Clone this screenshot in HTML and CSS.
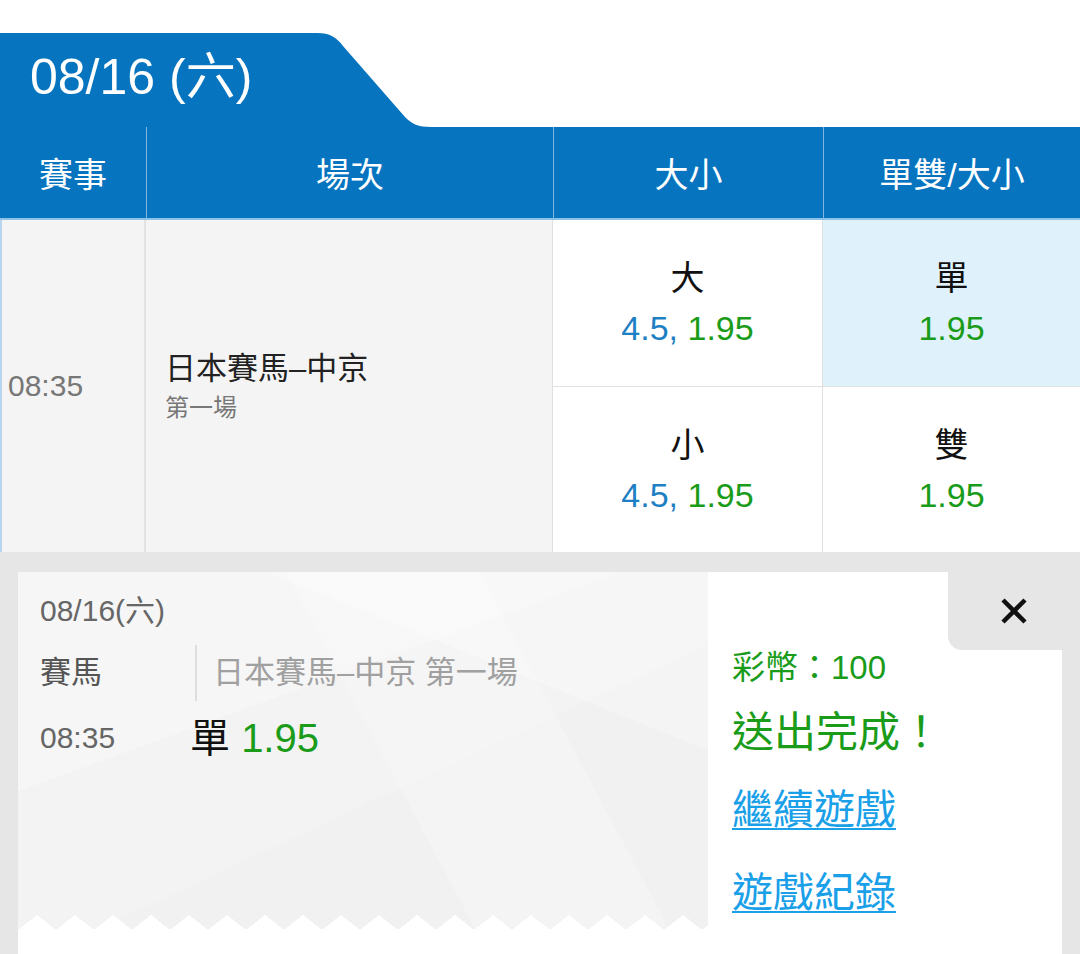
FILE: index.html
```html
<!DOCTYPE html>
<html>
<head>
    <meta charset="utf-8">
    <link rel="stylesheet" href="styles.css">
</head>
<body>
    <div class="page">
        <div class="date-bar">
            <div class="date-tab">08/16 (六)</div>
            <svg class="date-slope" width="150" height="94" viewBox="0 0 150 94">
                <path d="M0 0H34C47 0 53 4 60 13L122 84C129 91 135 94 148 94H0Z" fill="#0674bf"/>
            </svg>
        </div>
        <div class="board">
            <div class="th">賽事</div>
            <div class="th">場次</div>
            <div class="th">大小</div>
            <div class="th">單雙/大小</div>

            <div class="td-time">08:35</div>
            <div class="td-race">
                <div class="race-name">日本賽馬–中京</div>
                <div class="race-no">第一場</div>
            </div>
            <div class="odds top mid">
                <div class="pick">大</div>
                <div class="price"><span class="line">4.5,</span> <span class="rate">1.95</span></div>
            </div>
            <div class="odds top picked">
                <div class="pick">單</div>
                <div class="price"><span class="rate">1.95</span></div>
            </div>
            <div class="odds mid">
                <div class="pick">小</div>
                <div class="price"><span class="line">4.5,</span> <span class="rate">1.95</span></div>
            </div>
            <div class="odds">
                <div class="pick">雙</div>
                <div class="price"><span class="rate">1.95</span></div>
            </div>
        </div>

        <div class="result">
            <div class="ticket">
                <div class="stub">
                    <div class="stub-date">08/16(六)</div>
                    <div class="stub-grid">
                        <div class="stub-type">賽馬</div>
                        <div class="stub-event">日本賽馬–中京 第一場</div>
                        <div class="stub-time">08:35</div>
                        <div class="stub-bet">單 <span class="rate">1.95</span></div>
                    </div>
                </div>
                <div class="panel">
                    <div class="close">
                        <svg width="28" height="28" viewBox="0 0 28 28">
                            <path d="M3 3L25 25M25 3L3 25" stroke="#111" stroke-width="4.5" fill="none"/>
                        </svg>
                    </div>
                    <div class="panel-body">
                        <div class="coins">彩幣：100</div>
                        <div class="done">送出完成！</div>
                        <a href="#" class="more">繼續遊戲</a>
                        <a href="#" class="history">遊戲紀錄</a>
                    </div>
                </div>
            </div>
        </div>
    </div>
</body>
</html>
```

FILE: styles.css
```css
body {
    margin: 0;
    background: #fff;
    font-family: "Liberation Sans", "Noto Sans CJK TC", sans-serif;
}
.page {
    width: 1080px;
    padding-top: 33px;
}
.date-bar {
    display: flex;
    height: 94px;
}
.date-tab {
    width: 283px;
    box-sizing: border-box;
    padding-left: 30px;
    background: #0674bf;
    color: #fff;
    font-size: 50px;
    line-height: 88px;
    white-space: nowrap;
}
.date-slope {
    display: block;
}
.board {
    display: grid;
    grid-template-columns: 146px 407px 270px 257px;
    grid-template-rows: 93px 167px 165px;
}
.board > div {
    box-sizing: border-box;
}
.th {
    display: flex;
    align-items: center;
    justify-content: center;
    background: #0674bf;
    color: #fff;
    font-size: 34px;
    border-bottom: 2px solid #8cc1e8;
}
.th + .th {
    border-left: 1px solid #7fb6e0;
}
.td-time {
    grid-row: span 2;
    display: flex;
    align-items: center;
    padding-left: 6px;
    background: #f4f4f4;
    color: #777;
    font-size: 30px;
    border-left: 2px solid #b7d5ee;
    border-right: 2px solid #e2e2e2;
}
.td-race {
    grid-row: span 2;
    display: flex;
    flex-direction: column;
    justify-content: center;
    padding-left: 19px;
    background: #f4f4f4;
    border-right: 1px solid #e0e0e0;
}
.race-name {
    font-size: 31px;
    line-height: 44px;
    color: #222;
}
.race-no {
    font-size: 24px;
    line-height: 34px;
    color: #777;
}
.odds {
    display: flex;
    flex-direction: column;
    align-items: center;
    justify-content: center;
    background: #fff;
}
.odds.top {
    border-bottom: 1px solid #e0e0e0;
}
.odds.mid {
    border-right: 1px solid #e0e0e0;
}
.odds.picked {
    background: #dff2fb;
}
.pick {
    font-size: 34px;
    line-height: 50px;
    color: #111;
}
.price {
    font-size: 34px;
    line-height: 50px;
}
.line {
    color: #1f7fc4;
}
.rate {
    color: #1a9c1a;
}
.result {
    background: #e6e6e6;
    padding: 20px 18px 0;
}
.ticket {
    display: flex;
    height: 382px;
    background: #fff;
}
.stub {
    position: relative;
    width: 690px;
    height: 358px;
    box-sizing: border-box;
    padding: 19px 22px 0;
    background-color: #f3f3f3;
    background-image:
        linear-gradient(160deg, rgba(255,255,255,.25) 0 36%, transparent 36%),
        linear-gradient(62deg, transparent 52%, rgba(255,255,255,.2) 52% 74%, transparent 74%),
        linear-gradient(-25deg, rgba(0,0,0,.008) 0 42%, transparent 42%),
        linear-gradient(22deg, transparent 72%, rgba(255,255,255,.25) 72%);
}
.stub::after {
    content: '';
    position: absolute;
    left: 0;
    right: 0;
    bottom: 0;
    height: 15px;
    background: conic-gradient(from 128deg at 50% 0, #fff 0 104deg, transparent 0) 0 0 / 38px 15px repeat-x;
}
.stub-date {
    font-size: 30px;
    line-height: 40px;
    color: #666;
}
.stub-grid {
    display: grid;
    grid-template-columns: 150px 1fr;
    margin-top: 14px;
}
.stub-type {
    font-size: 31px;
    line-height: 56px;
    color: #555;
}
.stub-event {
    margin-left: 5px;
    padding-left: 16px;
    border-left: 2px solid #ddd;
    font-size: 31px;
    line-height: 56px;
    color: #a0a0a0;
}
.stub-time {
    margin-top: 12px;
    font-size: 30px;
    line-height: 50px;
    color: #666;
}
.stub-bet {
    margin-top: 12px;
    font-size: 40px;
    line-height: 50px;
    color: #111;
}
.panel {
    flex: 1;
    display: flex;
    flex-direction: column;
}
.close {
    align-self: flex-end;
    display: flex;
    align-items: center;
    justify-content: center;
    width: 114px;
    height: 78px;
    box-sizing: border-box;
    padding-left: 18px;
    background: #e6e6e6;
    border-bottom-left-radius: 14px;
}
.panel-body {
    padding-left: 24px;
}
.coins {
    font-size: 33px;
    line-height: 36px;
    color: #1a9c1a;
}
.done {
    margin-top: 22px;
    font-size: 42px;
    line-height: 50px;
    color: #1a9c1a;
}
.panel-body a {
    display: block;
    width: fit-content;
    font-size: 41px;
    line-height: 50px;
    color: #1aa0e8;
    text-decoration: underline;
    text-decoration-thickness: 2px;
    text-underline-offset: 4px;
}
.more {
    margin-top: 27px;
}
.history {
    margin-top: 33px;
}
```
